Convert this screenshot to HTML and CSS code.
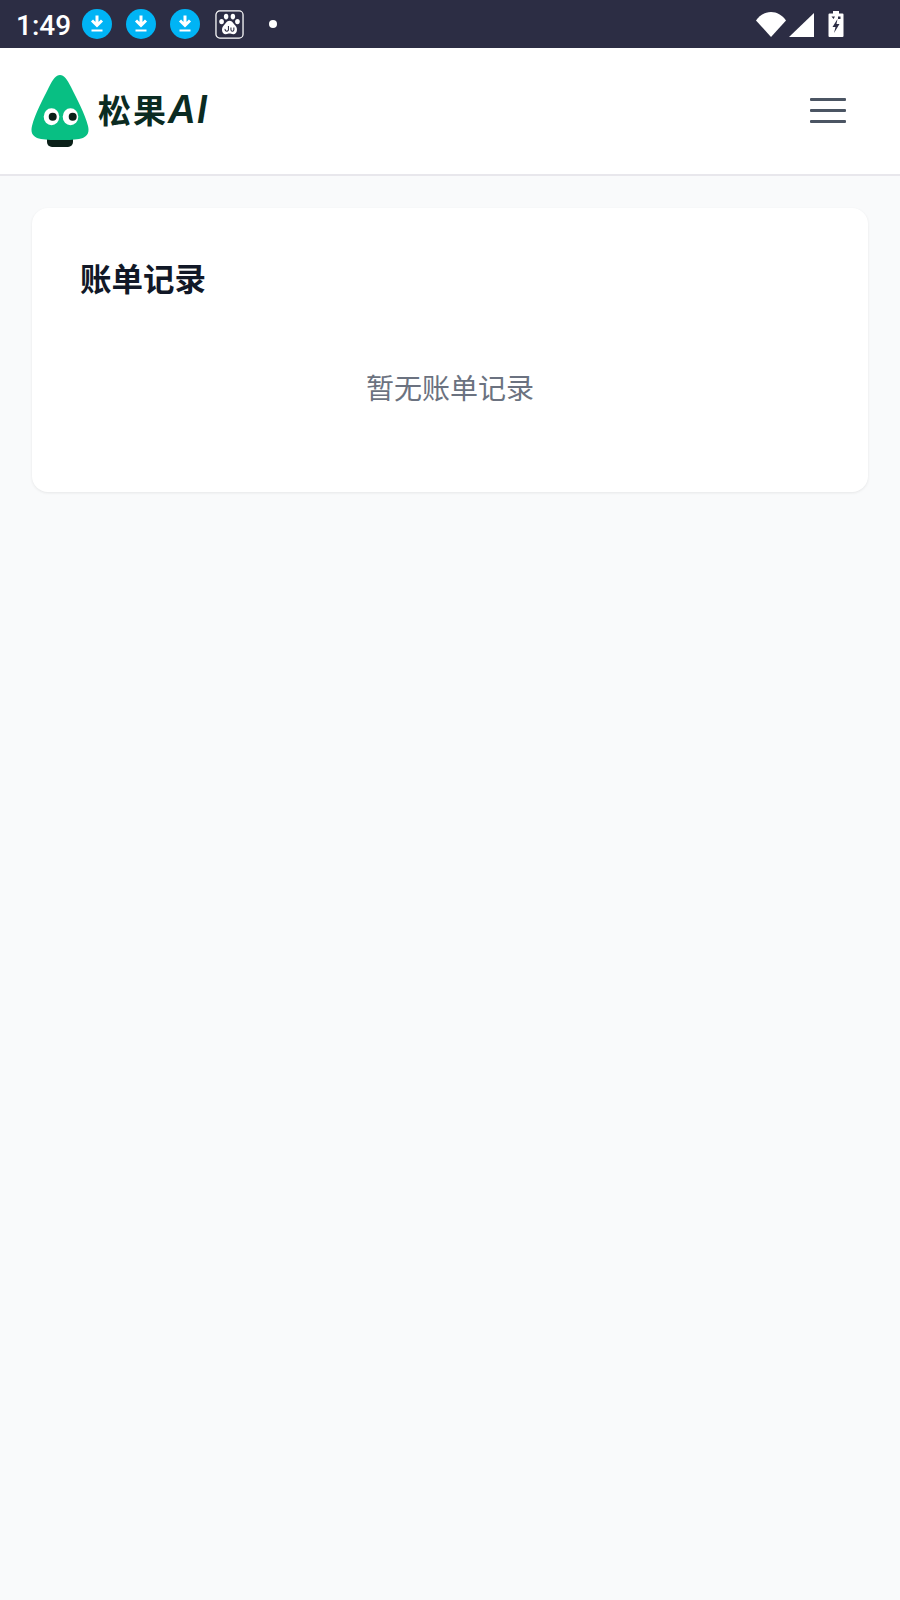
FILE: index.html
```html
<!DOCTYPE html>
<html lang="zh-CN">
<head>
    <meta charset="UTF-8">
    <meta name="viewport" content="width=device-width, initial-scale=1.0">
    <title>账单记录</title>
    <link rel="stylesheet" href="styles.css">
</head>
<body>
    <div class="statusbar">
        <div class="status-left">
            <span class="time">1:49</span>
            <svg class="dl-icon" viewBox="0 0 30 30"><circle cx="15" cy="15" r="15" fill="#00b4f5"/><path d="M15 6.500v9.500M10 11.500l5 5 5-5" fill="none" stroke="#fff" stroke-width="3"/><path d="M9.500 21.500h11" stroke="#fff" stroke-width="2"/></svg>
            <svg class="dl-icon" viewBox="0 0 30 30"><circle cx="15" cy="15" r="15" fill="#00b4f5"/><path d="M15 6.500v9.500M10 11.500l5 5 5-5" fill="none" stroke="#fff" stroke-width="3"/><path d="M9.500 21.500h11" stroke="#fff" stroke-width="2"/></svg>
            <svg class="dl-icon" viewBox="0 0 30 30"><circle cx="15" cy="15" r="15" fill="#00b4f5"/><path d="M15 6.500v9.500M10 11.500l5 5 5-5" fill="none" stroke="#fff" stroke-width="3"/><path d="M9.500 21.500h11" stroke="#fff" stroke-width="2"/></svg>
            <svg class="baidu-icon" viewBox="0 0 30 30">
                <rect x="1" y="1" width="28" height="28" rx="4" fill="none" stroke="#fff" stroke-width="1.300"/>
                <ellipse cx="11.500" cy="6.800" rx="2.300" ry="2.900" fill="#fff"/>
                <ellipse cx="18.500" cy="6.800" rx="2.300" ry="2.900" fill="#fff"/>
                <ellipse cx="6.800" cy="12" rx="2.400" ry="2.800" fill="#fff"/>
                <ellipse cx="23.200" cy="12" rx="2.400" ry="2.800" fill="#fff"/>
                <path d="M15 11c3 0 4 3 6 5 3 3 2 9-2 9-2 0-3-.6-4-.6s-2 .6-4 .6c-4 0-5-6-2-9 2-2 3-5 6-5z" fill="#fff"/>
                <path d="M10.500 19.500a1.800 1.800 0 1 0 3.400 0M13.900 16.500v4.500M16.500 18v2.500a1.500 1.500 0 0 0 3 0V18" fill="none" stroke="#2c2d44" stroke-width="1.100"/>
            </svg>
            <span class="dot"></span>
        </div>
        <div class="status-right">
            <svg class="wifi-icon" viewBox="0 0 30 25"><path d="M0 8.500C4 3 9 0 15 0s11 3 15 8.500L15 25z" fill="#fff"/></svg>
            <svg class="signal-icon" viewBox="0 0 25 24"><path d="M25 0v24H0z" fill="#fff"/></svg>
            <svg class="battery-icon" viewBox="0 0 16 26"><path d="M5 0h6v2.500h3.500a1 1 0 0 1 1 1V25a1 1 0 0 1-1 1h-13a1 1 0 0 1-1-1V3.500a1 1 0 0 1 1-1H5z" fill="#fff"/><path d="M9.500 8 4.500 16h3l-1.500 6 5.500-9h-3z" fill="#2c2d44"/><path d="M3.500 5.500h3.500l-1.500 2.500zM10 5.500h2.500v2.500h-2.500z" fill="#2c2d44"/></svg>
        </div>
    </div>

    <header class="topbar">
        <a class="logo" href="#">
            <svg class="logo-mark" viewBox="0 0 58 72">
                <rect x="16" y="58" width="26" height="14" rx="5" fill="#0a2018"/>
                <path d="M29 0c4 0 7 4 11 12 6 12 14 27 17 39 2 8-2 12-9 13-6 1-13 1-19 1s-13 0-19-1c-7-1-11-5-9-13 3-12 11-27 17-39C22 4 25 0 29 0z" fill="#08bf83"/>
                <ellipse cx="20.500" cy="41.700" rx="7.800" ry="8.500" fill="#fff"/>
                <ellipse cx="39.500" cy="41.700" rx="7.800" ry="8.500" fill="#fff"/>
                <circle cx="21.700" cy="41.700" r="4" fill="#0a2018"/>
                <circle cx="41.700" cy="41.700" r="4" fill="#0a2018"/>
            </svg>
            <span class="logo-text">松果<em>AI</em></span>
        </a>
        <div class="menu-btn">
            <span></span>
            <span></span>
            <span></span>
        </div>
    </header>

    <main class="content">
        <section class="card">
            <h2>账单记录</h2>
            <p class="empty">暂无账单记录</p>
        </section>
    </main>
</body>
</html>
```

FILE: styles.css
```css
* {
    box-sizing: border-box;
}

body {
    margin: 0;
    min-height: 1600px;
    font-family: 'Inter', 'Noto Sans CJK SC', sans-serif;
    background-color: #f9fafb;
}

.statusbar {
    height: 48px;
    background-color: #2c2d44;
    display: flex;
    justify-content: space-between;
    align-items: center;
    padding: 0 56px 0 16px;
}

.status-left {
    display: flex;
    align-items: center;
}

.time {
    color: #fff;
    font-family: 'Roboto', sans-serif;
    font-size: 28px;
    font-weight: 500;
    margin-right: 11px;
    padding-top: 2px;
}

.dl-icon {
    width: 30px;
    height: 30px;
    margin-right: 14px;
}

.baidu-icon {
    width: 29px;
    height: 29px;
    margin-left: 1px;
}

.dot {
    width: 8px;
    height: 8px;
    border-radius: 50%;
    background-color: #fff;
    margin-left: 25px;
}

.status-right {
    display: flex;
    align-items: flex-end;
    margin-bottom: 1px;
}

.wifi-icon {
    width: 30px;
    height: 25px;
}

.signal-icon {
    width: 25px;
    height: 24px;
    margin-left: 3px;
}

.battery-icon {
    width: 16px;
    height: 26px;
    margin-left: 14px;
}

.topbar {
    height: 128px;
    background-color: #fff;
    border-bottom: 2px solid #e8e7ec;
    display: flex;
    justify-content: space-between;
    align-items: center;
    padding: 0 54px 0 31px;
}

.logo {
    display: flex;
    align-items: center;
    text-decoration: none;
}

.logo-mark {
    width: 58px;
    height: 72px;
}

.logo-text {
    color: #0b2b22;
    font-size: 33px;
    font-weight: 700;
    letter-spacing: 2px;
    margin-left: 9px;
    margin-bottom: 4px;
    white-space: nowrap;
}

.logo-text em {
    font-family: 'Inter', sans-serif;
    font-size: 38px;
    font-weight: 600;
    font-style: italic;
    letter-spacing: 1px;
}

.menu-btn {
    width: 36px;
    display: flex;
    flex-direction: column;
    gap: 8px;
    margin-bottom: 2px;
}

.menu-btn span {
    display: block;
    height: 3px;
    background-color: #4b5563;
    border-radius: 1px;
}

.content {
    padding: 32px;
}

.card {
    background-color: #fff;
    border-radius: 16px;
    padding: 52px 48px 48px;
    height: 284px;
    box-shadow: 0 1px 3px rgba(0, 0, 0, 0.08);
}

.card h2 {
    margin: 0;
    font-size: 31.5px;
    line-height: 40px;
    font-weight: 700;
    color: #111827;
}

.empty {
    margin: 69px 0 0;
    text-align: center;
    font-size: 28px;
    line-height: 40px;
    color: #6b7280;
}
```
